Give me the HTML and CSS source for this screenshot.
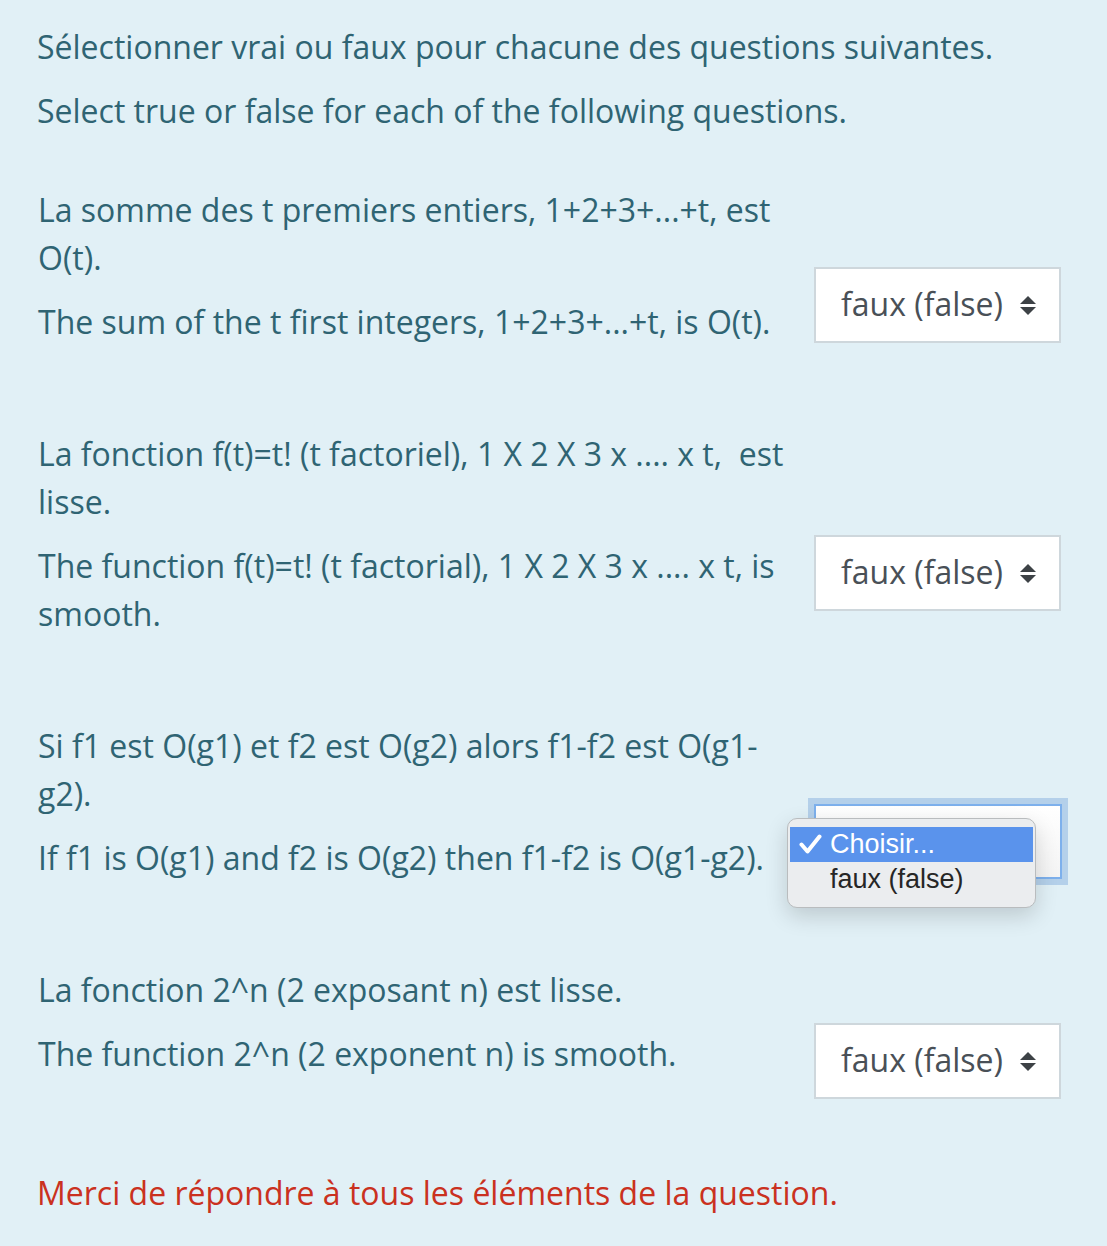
FILE: index.html
```html
<!DOCTYPE html>
<html lang="fr">
<head>
<meta charset="utf-8">
<title>Vrai ou faux</title>
<link rel="stylesheet" href="styles.css">
</head>
<body>
<div class="formulation">
  <div class="intro">
    <p>Sélectionner vrai ou faux pour chacune des questions suivantes.</p>
    <p>Select true or false for each of the following questions.</p>
  </div>
  <div class="questions">
    <div class="row">
      <div class="text">
        <p>La somme des t premiers entiers, 1+2+3+...+t, est O(t).</p>
        <p>The sum of the t first integers, 1+2+3+...+t, is O(t).</p>
      </div>
      <div class="control">
        <div class="select">faux (false)<svg class="arrows" width="16" height="19" viewBox="0 0 16 19"><path d="M8 0 L16 8 L0 8 Z M0 11 L16 11 L8 19 Z" fill="#3d4246"/></svg></div>
      </div>
    </div>
    <div class="row">
      <div class="text">
        <p>La fonction f(t)=t! (t factoriel), 1 X 2 X 3 x .... x t,&nbsp; est lisse.</p>
        <p>The function f(t)=t! (t factorial), 1 X 2 X 3 x .... x t, is smooth.</p>
      </div>
      <div class="control">
        <div class="select">faux (false)<svg class="arrows" width="16" height="19" viewBox="0 0 16 19"><path d="M8 0 L16 8 L0 8 Z M0 11 L16 11 L8 19 Z" fill="#3d4246"/></svg></div>
      </div>
    </div>
    <div class="row">
      <div class="text">
        <p>Si f1 est O(g1) et f2 est O(g2) alors f1-f2 est O(g1-g2).</p>
        <p>If f1 is O(g1) and f2 is O(g2) then f1-f2 is O(g1-g2).</p>
      </div>
      <div class="control">
        <div class="select focused"></div>
        <div class="menu">
          <div class="item active"><svg class="check" width="23" height="20" viewBox="0 0 23 20"><path d="M2.5 10.5 L8.5 17.5 L20.5 2.5" fill="none" stroke="#fff" stroke-width="4" stroke-linecap="round" stroke-linejoin="round"/></svg>Choisir...</div>
          <div class="item">faux (false)</div>
        </div>
      </div>
    </div>
    <div class="row">
      <div class="text">
        <p>La fonction 2^n (2 exposant n) est lisse.</p>
        <p>The function 2^n (2 exponent n) is smooth.</p>
      </div>
      <div class="control">
        <div class="select">faux (false)<svg class="arrows" width="16" height="19" viewBox="0 0 16 19"><path d="M8 0 L16 8 L0 8 Z M0 11 L16 11 L8 19 Z" fill="#3d4246"/></svg></div>
      </div>
    </div>
  </div>
  <div class="error">Merci de répondre à tous les éléments de la question.</div>
</div>
</body>
</html>
```
FILE: styles.css
```css
html, body {
  margin: 0;
  padding: 0;
  background: #e1f0f6;
}
body {
  font-family: "Open Sans", "Liberation Sans", sans-serif;
  font-size: 32px;
  line-height: 48px;
  color: #2f6473;
}
.formulation {
  padding: 23px 0 40px 37px;
  min-height: 1183px;
}
p { margin: 0 0 16px; }
.intro { margin-bottom: 51px; }
.intro p:last-child { margin-bottom: 0; }
.questions {
  display: flex;
  flex-direction: column;
  gap: 6px;
}
.row {
  display: flex;
  align-items: center;
}
.text {
  width: 760px;
  padding-left: 1px;
  padding-bottom: 78px;
}
.text p:last-child { margin-bottom: 0; }
.control {
  position: relative;
  margin-left: 16px;
}
.select {
  box-sizing: border-box;
  width: 247px;
  height: 76px;
  border: 2px solid #ced7dc;
  background: #fff;
  color: #495057;
  display: flex;
  align-items: center;
  padding-left: 25px;
  padding-bottom: 2px;
}
.arrows {
  margin-left: 17px;
  margin-top: 2px;
}
.select.focused {
  width: 248px;
  height: 75px;
  border: 2px solid #7db0ec;
  box-shadow: 0 0 0 6px #b4d0ea;
  background: linear-gradient(#ffffff, #f4f4f4);
}
.menu {
  position: absolute;
  left: -27px;
  top: 14px;
  width: 249px;
  box-sizing: border-box;
  padding: 8px 2px 10px;
  background: #ebedef;
  border: 1px solid #b9bcbe;
  border-radius: 10px;
  box-shadow: 0 8px 22px rgba(0, 0, 0, 0.16);
  font-family: "Liberation Sans", Arial, sans-serif;
  font-size: 27px;
  line-height: 35px;
  color: #262626;
}
.item {
  padding-left: 40px;
  height: 35px;
  position: relative;
}
.item.active {
  background: #5a93ec;
  color: #fff;
}
.check {
  position: absolute;
  left: 9px;
  top: 7px;
}
.error {
  margin-top: 13px;
  color: #ca3120;
}
```
